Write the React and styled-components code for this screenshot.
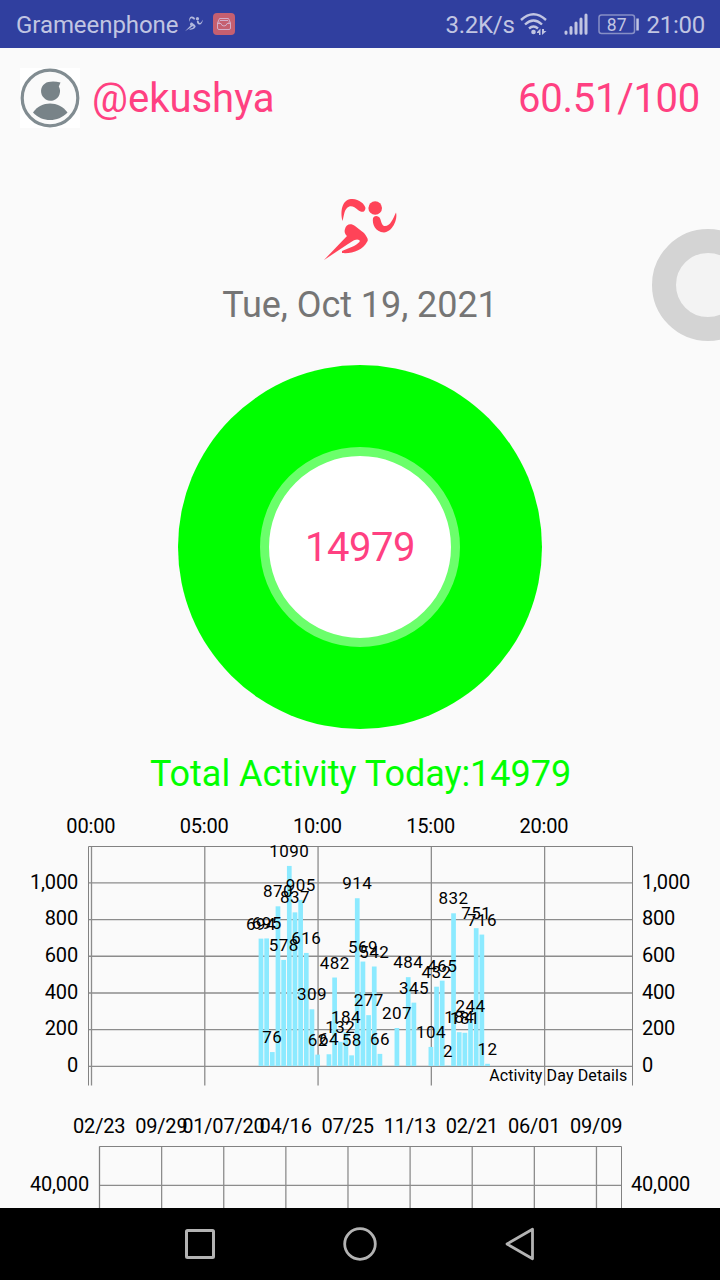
import React from 'react';
import styled, {createGlobalStyle} from 'styled-components';

const GlobalStyle = createGlobalStyle`
    body {
        margin: 0;
        background: #fafafa;
        font-family: Roboto, "Liberation Sans", sans-serif;
    }
    * { box-sizing: border-box; }
    svg { display: block; flex: none; }
`;

const Screen = styled.div`
    position: relative;
    display: flex;
    flex-direction: column;
    width: 720px;
    height: 1280px;
    overflow: hidden;
    background: #fafafa;
`;

const StatusBar = styled.header`
    display: flex;
    align-items: center;
    flex: none;
    height: 48px;
    padding: 0 15px 0 16px;
    background: #303f9f;
    color: #c1c5e2;
    font-size: 24px;
    line-height: 48px;
    white-space: nowrap;
`;

const StatusText = styled.span`
    width: ${({$width}) => $width}px;
    padding-top: 2px;
    letter-spacing: ${({$spacing}) => $spacing || 0}px;
`;

const StatusGroup = styled.div`
    display: flex;
    align-items: center;
    margin-left: ${({$end}) => ($end ? 'auto' : '0')};
`;

const Content = styled.main`
    display: flex;
    flex-direction: column;
    align-items: center;
    flex: 1;
    min-height: 0;
    overflow: hidden;
`;

const Header = styled.section`
    display: flex;
    align-items: center;
    align-self: stretch;
    flex: none;
    height: 100px;
    padding: 0 20px;
    color: #ff4081;
    font-size: 40px;
`;

const UserName = styled.div`
    margin-left: 12px;
`;

const Score = styled.div`
    margin-left: auto;
    letter-spacing: -0.28px;
`;

const Logo = styled.div`
    flex: none;
    height: 132px;
    padding: 50px 0 0 1px;
`;

const DateText = styled.div`
    flex: none;
    height: 85px;
    color: #757575;
    font-size: 36px;
    line-height: 50px;
    letter-spacing: -0.06px;
`;

const Dial = styled.div`
    display: flex;
    align-items: center;
    justify-content: center;
    flex: none;
    width: 364px;
    height: 364px;
    border-radius: 50%;
    background: #00ff00;
`;

const DialCenter = styled.div`
    display: flex;
    align-items: center;
    justify-content: center;
    width: 200px;
    height: 200px;
    border: 9px solid #6bff6b;
    border-radius: 50%;
    background: #fff;
    color: #ff4081;
    font-size: 40px;
    letter-spacing: -0.5px;
`;

const Total = styled.div`
    flex: none;
    height: 77px;
    padding: 20px 0 0 1px;
    color: #00ff00;
    font-size: 36px;
    line-height: 50px;
    letter-spacing: -0.04px;
`;

const Chart = styled.svg`
    width: 720px;
    height: ${({$height}) => $height}px;

    line {
        stroke: #8c8c8c;
        stroke-width: 1.3;
    }
    path.frame {
        stroke: #828282;
        fill: none;
    }
    rect.bar { fill: #8ceaff; }
    text { fill: #000; font-size: 20px; letter-spacing: -0.18px; }
    text.value { font-size: 17px; letter-spacing: 0.45px; }
    text.note { font-size: 16px; letter-spacing: 0.12px; }
`;

const AssistBall = styled.div`
    position: absolute;
    top: 229px;
    left: 652px;
    width: 112px;
    height: 112px;
    border: 24px solid #d4d4d4;
    border-radius: 50%;
    background: #f3f3f3;
`;

const NavBar = styled.nav`
    display: flex;
    align-items: center;
    justify-content: center;
    gap: 120px;
    flex: none;
    height: 72px;
    background: #000;
`;

const steps = [
    [30, 694], [31, 695], [32, 76], [33, 870], [34, 578], [35, 1090], [36, 837],
    [37, 905], [38, 616], [39, 309], [40, 62], [42, 64], [43, 482], [44, 132],
    [45, 184], [46, 58], [47, 914], [48, 569], [49, 277], [50, 542], [51, 66],
    [54, 207], [56, 484], [57, 345], [60, 104], [61, 432], [62, 465], [63, 2],
    [64, 832], [65, 184], [66, 181], [67, 244], [68, 751], [69, 716], [70, 12],
];

const hours = ['00:00', '05:00', '10:00', '15:00', '20:00'];
const levels = [0, 200, 400, 600, 800, 1000];
const dates = ['02/23', '09/29', '01/07/20', '04/16', '07/25', '11/13', '02/21', '06/01', '09/09'];

// quarter of an hour -> x, step count -> y
const slotX = slot => 91.5 + slot * 5.664;
const stepY = value => 260.4 - value * 0.18355;

const Runner = ({width, height, color}) => (
    <svg width={width} height={height} viewBox="0 0 74 64" fill={color}>
        <circle cx="51.200" cy="10" r="6.800" />
        <path d="M18.5 23C16 13 18 2 27 1C34 0 41 6 41.5 10C41 15 37 14.500 34 12C30 8 26 7 23 10C20 13 20 18 18.500 23Z" />
        <path d="M49 20Q51 16.500 55 19C57 20 57 27 60 28C66 29 69 21 72 14.500C74 22 68 34 60 34.500C51 34 48 26 49 20Z" />
        <path d="M21 31C22 26 27 25 31 28L40 35C43 39 45 42 43 44C39 52 28 56 18 55V53L30 48C35 45 37 43 35 42C32 40 27 44 24 46L0 62L23 38C21 36 20 34 21 31Z" />
    </svg>
);

const Avatar = () => (
    <svg width="60" height="60" viewBox="0 0 60 60">
        <path fill="#fff" d="M0 0H60V60H0Z" />
        <circle cx="30" cy="30" r="27.800" fill="#fafafa" stroke="#818c91" strokeWidth="3.200" />
        <path fill="#788388" d="M30.500 13.700Q35 13.200 40.500 14.500L38.800 18.500A9.500 9.500 0 1 1 30.500 13.700Z" />
        <path fill="#788388" d="M13 44.500C21 32.500 39 32.500 47.500 44.500C38 54.500 22 54.500 13 44.500Z" />
    </svg>
);

const MailIcon = () => (
    <svg width="22" height="22" viewBox="0 0 22 22" style={{marginLeft: 10}}>
        <rect width="22" height="22" rx="4" fill="#c55f70" />
        <g fill="none" stroke="#d3adc9" strokeWidth="1">
            <path d="M6.500 5.500H15.500L17.500 10V15Q17.500 16.500 16 16.500H6Q4.500 16.500 4.500 15V10Z" />
            <path d="M7 7.500H15M4.500 10.500H8Q8.500 13 11 13T14 10.500H17.500M6 8.500V11M16 8.500V11" />
        </g>
    </svg>
);

const WifiIcon = () => (
    <svg width="28" height="24" viewBox="0 0 28 24">
        <g fill="none" stroke="#c1c5e2" strokeWidth="2.400">
            <path d="M1 8Q13.500-3.500 26 8" />
            <path d="M5 12.500Q13.500 4.500 22 12.500" />
            <path d="M9 16.500Q13.500 12.500 18 16.500" />
        </g>
        <circle cx="13.500" cy="20" r="2.300" fill="#c1c5e2" />
        <path fill="#c1c5e2" d="M17 20L20.500 16.500V23H19V21H17ZM22 17V23L26.500 19H24V17Z" />
    </svg>
);

const SignalIcon = () => (
    <svg width="24" height="22" viewBox="0 0 24 22" style={{marginLeft: 16}}>
        <path stroke="#c1c5e2" strokeWidth="3" strokeLinecap="round" d="M2 19V20.300M7 14.500V20.300M12 10V20.300M17 6V20.300M22 2V20.300" />
    </svg>
);

const BatteryIcon = () => (
    <svg width="42" height="22" viewBox="0 0 42 22" style={{marginLeft: 10, marginRight: 6}}>
        <rect x="1" y="2" width="35.500" height="18.500" rx="2.500" fill="none" stroke="#8790c6" strokeWidth="1.500" />
        <path fill="#c1c5e2" d="M38.300 5.500H40.800V17.500H38.300Z" />
        <text x="18.700" y="17.500" textAnchor="middle" fontSize="17.500" fill="#c1c5e2">87</text>
    </svg>
);

const DayChart = () => (
    <Chart $height={294}>
        {hours.map((hour, i) => (
            <g key={hour}>
                <line x1={slotX(i * 20)} x2={slotX(i * 20)} y1="40.500" y2="279.500" />
                <text x={slotX(i * 20) - 0.7} y="27" textAnchor="middle">{hour}</text>
            </g>
        ))}
        {levels.map(level => (
            <g key={level}>
                <line x1="88.500" x2="632.500" y1={stepY(level)} y2={stepY(level)} />
                <text x="78" y={stepY(level) + 5.800} textAnchor="end">{level.toLocaleString('en-US')}</text>
                <text x="642" y={stepY(level) + 5.800}>{level.toLocaleString('en-US')}</text>
            </g>
        ))}
        <path className="frame" d="M88.500 279.500V40.500H632.500V279.500" />
        {steps.map(([slot, value]) => (
            <rect className="bar" key={slot} x={slotX(slot) - 2.800} y={stepY(value) - 0.4} width="4.700" height={260.4 - stepY(value)} />
        ))}
        {steps.map(([slot, value]) => (
            <text className="value" key={slot} x={slotX(slot) - 0.4} y={stepY(value) - 9.400} textAnchor="middle">{value}</text>
        ))}
        <text className="note" x="627.500" y="275" textAnchor="end">Activity Day Details</text>
    </Chart>
);

const HistoryChart = () => (
    <Chart $height={108}>
        {dates.map((date, i) => (
            <g key={date}>
                <line x1={99.5 + i * 62.12} x2={99.5 + i * 62.12} y1="46.500" y2="108" />
                <text x={99.2 + i * 62.12} y="33" textAnchor="middle">{date}</text>
            </g>
        ))}
        <line x1="99.500" x2="621.500" y1="85.300" y2="85.300" />
        <path className="frame" d="M99.500 108V46.500H621.500V108" />
        <text x="89" y="91" textAnchor="end">40,000</text>
        <text x="631" y="91">40,000</text>
    </Chart>
);

const App = () => (
    <Screen>
        <GlobalStyle />
        <StatusBar>
            <StatusText $width={169} $spacing={-0.06}>Grameenphone</StatusText>
            <Runner width={18} height={16} color="#b1b7dc" />
            <MailIcon />
            <StatusGroup $end>
                <StatusText $width={75} $spacing={-0.25}>3.2K/s</StatusText>
                <WifiIcon />
                <SignalIcon />
                <BatteryIcon />
                <StatusText $spacing={-0.25}>21:00</StatusText>
            </StatusGroup>
        </StatusBar>
        <Content>
            <Header>
                <Avatar />
                <UserName>@ekushya</UserName>
                <Score>60.51/100</Score>
            </Header>
            <Logo><Runner width={74} height={64} color="#ff4358" /></Logo>
            <DateText>Tue, Oct 19, 2021</DateText>
            <Dial>
                <DialCenter>14979</DialCenter>
            </Dial>
            <Total>Total Activity Today:14979</Total>
            <DayChart />
            <HistoryChart />
        </Content>
        <AssistBall />
        <NavBar>
            <svg width="40" height="40" fill="none" stroke="#b3b3b3" strokeWidth="3">
                <rect x="6.500" y="6.500" width="27" height="27" rx="1" />
            </svg>
            <svg width="40" height="40" fill="none" stroke="#b3b3b3" strokeWidth="2.800">
                <circle cx="20" cy="20" r="15.300" />
            </svg>
            <svg width="40" height="40" fill="none" stroke="#b3b3b3" strokeWidth="2.800" strokeLinejoin="round">
                <path d="M7 20L32.500 5.200V34.800Z" />
            </svg>
        </NavBar>
    </Screen>
);

export default App;
